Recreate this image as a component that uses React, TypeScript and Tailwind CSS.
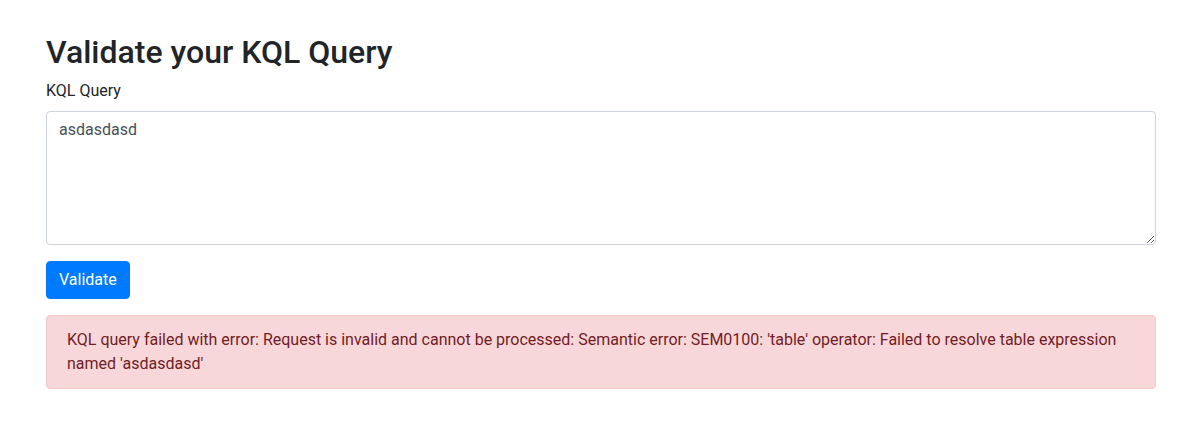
import React, { useState } from 'react';

export default function App() {
    const [query, setQuery] = useState('asdasdasd');

    return (
        <div className="min-h-screen bg-white font-['Roboto',sans-serif] text-[#212529] text-base leading-6">
            <div className="pl-[46px] pr-[48px] pt-[33px]">
                <h2 className="text-[32px] font-medium leading-[1.2] mb-2">Validate your KQL Query</h2>

                <div className="mb-4">
                    <label htmlFor="kql" className="block mb-2">KQL Query</label>
                    <textarea
                        id="kql"
                        rows={5}
                        value={query}
                        onChange={(e) => setQuery(e.target.value)}
                        className="block w-full h-[134px] px-3 py-1.5 text-base leading-6 text-[#495057] bg-white border border-[#ced4da] rounded outline-none"
                    />
                </div>

                <button
                    type="button"
                    className="h-[38px] px-3 bg-[#007bff] border border-[#007bff] text-white text-base leading-6 rounded"
                >
                    Validate
                </button>

                <div className="mt-4 px-5 py-3 bg-[#f8d7da] border border-[#f5c6cb] text-[#721c24] rounded">
                    KQL query failed with error: Request is invalid and cannot be processed: Semantic error: SEM0100: 'table' operator: Failed to resolve table expression named 'asdasdasd'
                </div>
            </div>
        </div>
    );
}
